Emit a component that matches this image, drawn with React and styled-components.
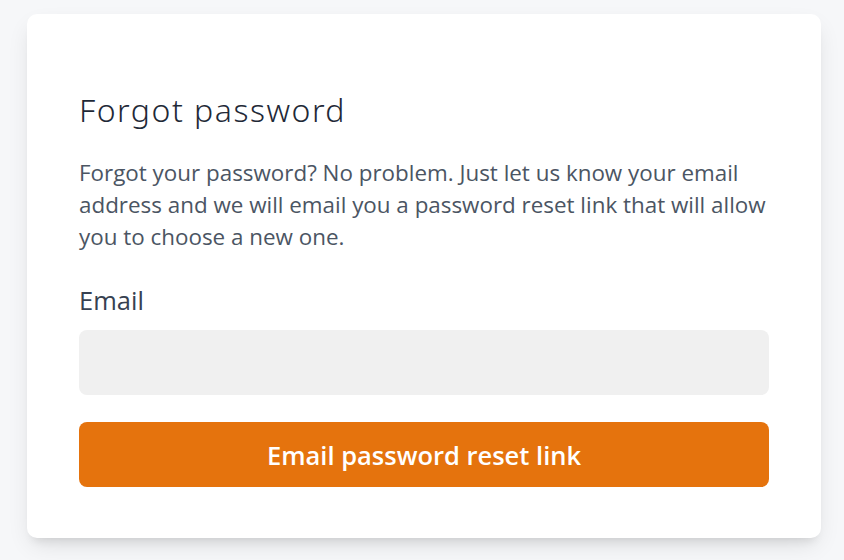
import React from "react";
import styled, { createGlobalStyle } from "styled-components";

const Global = createGlobalStyle`
  html, body { margin: 0; padding: 0; background: #f6f7f9; }
  body { font-family: "Open Sans", "Noto Sans", sans-serif; }
  * { box-sizing: border-box; }
`;

const Page = styled.div`
  width: 844px;
  height: 560px;
  padding: 14px 23px 0 27px;
  background: #f6f7f9;
`;

const Card = styled.div`
  width: 794px;
  height: 524px;
  background: #ffffff;
  border-radius: 10px;
  box-shadow: 0 10px 25px -5px rgba(0, 0, 0, 0.12), 0 8px 10px -6px rgba(0, 0, 0, 0.1);
  padding: 78px 52px 50px 52px;
  display: flex;
  flex-direction: column;
`;

const Title = styled.h1`
  margin: 0;
  font-family: "Noto Sans", "Open Sans", sans-serif;
  font-weight: 300;
  font-size: 32px;
  letter-spacing: 1.5px;
  line-height: 36px;
  color: #1f2937;
`;

const Text = styled.p`
  margin: 29px 0 0;
  font-size: 22.4px;
  line-height: 32px;
  color: #4b5563;
`;

const Label = styled.label`
  display: block;
  margin-top: 32px;
  font-size: 25.5px;
  line-height: 30px;
  color: #374151;
`;

const Input = styled.input`
  margin-top: 15px;
  width: 100%;
  height: 65px;
  border: none;
  border-radius: 8px;
  background: #f0f0f0;
  outline: none;
`;

const Button = styled.button`
  margin-top: 27px;
  width: 100%;
  height: 65px;
  border: none;
  border-radius: 8px;
  background: #e5730d;
  color: #ffffff;
  font-family: "Open Sans", sans-serif;
  font-weight: 600;
  font-size: 25.5px;
`;

export default function App() {
  return (
    <>
      <Global />
      <Page>
        <Card>
          <Title>Forgot password</Title>
          <Text>
            Forgot your password? No problem. Just let us know your email address and we will email you a password reset link that will allow you to choose a new one.
          </Text>
          <Label>Email</Label>
          <Input type="email" />
          <Button>Email password reset link</Button>
        </Card>
      </Page>
    </>
  );
}
